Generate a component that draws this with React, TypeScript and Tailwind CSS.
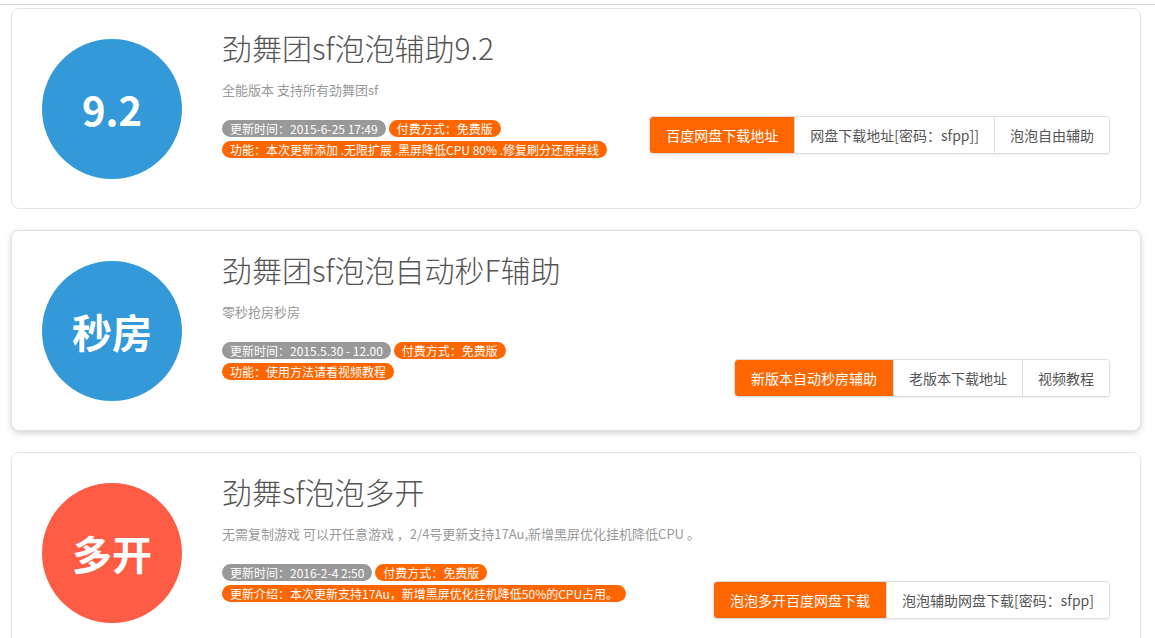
type Tool = {
  badge: string;
  badgeColor: string;
  title: string;
  desc: string;
  updated: string;
  info: string;
  buttons: string[];
  btnOffset: string;
  hover?: boolean;
};

const tools: Tool[] = [
  {
    badge: "9.2",
    badgeColor: "bg-[#3399d8]",
    title: "劲舞团sf泡泡辅助9.2",
    desc: "全能版本 支持所有劲舞团sf",
    updated: "更新时间：2015-6-25 17:49",
    info: "功能：本次更新添加 .无限扩展 .黑屏降低CPU 80% .修复刷分还原掉线",
    buttons: ["百度网盘下载地址", "网盘下载地址[密码：sfpp]]", "泡泡自由辅助"],
    btnOffset: "mt-[-4px]",
  },
  {
    badge: "秒房",
    badgeColor: "bg-[#3399d8]",
    title: "劲舞团sf泡泡自动秒F辅助",
    desc: "零秒抢房秒房",
    updated: "更新时间：2015.5.30 - 12.00",
    info: "功能：使用方法请看视频教程",
    buttons: ["新版本自动秒房辅助", "老版本下载地址", "视频教程"],
    btnOffset: "mt-[17px]",
    hover: true,
  },
  {
    badge: "多开",
    badgeColor: "bg-[#ff5c45]",
    title: "劲舞sf泡泡多开",
    desc: "无需复制游戏 可以开任意游戏 ，2/4号更新支持17Au,新增黑屏优化挂机降低CPU 。",
    updated: "更新时间：2016-2-4 2:50",
    info: "更新介绍：本次更新支持17Au，新增黑屏优化挂机降低50%的CPU占用。",
    buttons: ["泡泡多开百度网盘下载", "泡泡辅助网盘下载[密码：sfpp]"],
    btnOffset: "mt-[17px]",
  },
];

const Pill = ({ text, gray }: { text: string; gray?: boolean }) => (
  <span
    className={`inline-flex h-[17px] items-center rounded-full px-[8px] text-[12px] leading-none text-white ${
      gray ? "bg-[#999]" : "bg-[#ff6600]"
    }`}
  >
    {text}
  </span>
);

const ToolCard = ({ tool }: { tool: Tool }) => (
  <div
    className={`ml-[11px] flex h-[201px] w-[1130px] items-start rounded-[8px] border border-[#e3e3e3] bg-white ${
      tool.hover ? "shadow-[0_2px_6px_rgba(0,0,0,0.18)]" : ""
    }`}
  >
    <div
      className={`ml-[30px] mt-[30px] flex h-[140px] w-[140px] shrink-0 items-center justify-center rounded-full ${tool.badgeColor}`}
    >
      <span className="text-[40px] font-bold text-white">{tool.badge}</span>
    </div>
    <div className="ml-[40px] flex-1 pr-[30px] pt-[20px]">
      <h2 className="text-[30px] font-light leading-[36px] text-[#555]">{tool.title}</h2>
      <p className="mt-[15px] text-[13px] leading-[20px] text-[#999]">{tool.desc}</p>
      <div className="mt-[20px] flex items-start justify-between">
        <div className="flex flex-col items-start gap-[4px]">
          <div className="flex gap-[3px]">
            <Pill text={tool.updated} gray />
            <Pill text="付费方式：免费版" />
          </div>
          <Pill text={tool.info} />
        </div>
        <div
          className={`flex overflow-hidden rounded-[4px] border border-[#ddd] shadow-[0_1px_3px_rgba(0,0,0,0.08)] ${tool.btnOffset}`}
        >
          {tool.buttons.map((b, i) => (
            <span
              key={i}
              className={`flex h-[36px] items-center px-[15px] text-[14px] ${
                i === 0
                  ? "bg-[#ff6600] px-[16px] text-white"
                  : "border-l border-[#ddd] bg-white text-[#555]"
              }`}
            >
              {b}
            </span>
          ))}
        </div>
      </div>
    </div>
  </div>
);

export default function App() {
  return (
    <div className="h-[638px] overflow-hidden bg-white font-['Noto_Sans_CJK_SC',sans-serif]">
      <div className="h-[5px] border-b border-[#d6d6d6]" />
      <div className="mt-[3px] flex flex-col gap-[21px]">
        {tools.map((t, i) => (
          <ToolCard key={i} tool={t} />
        ))}
      </div>
    </div>
  );
}
